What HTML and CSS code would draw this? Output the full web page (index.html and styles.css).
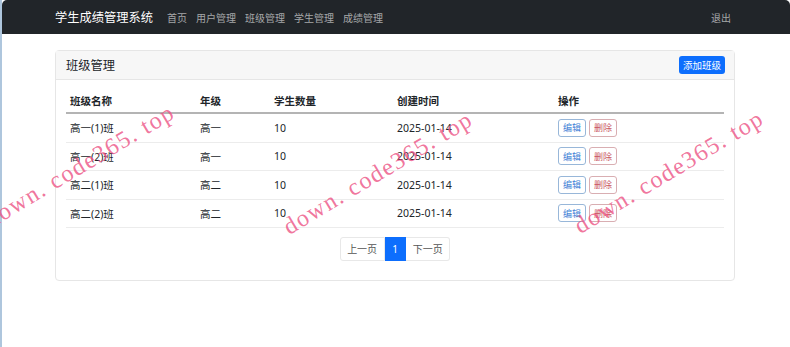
FILE: index.html
```html
<!DOCTYPE html>
<html lang="zh-CN">
<head>
    <meta charset="UTF-8">
    <meta name="viewport" content="width=device-width, initial-scale=1.0">
    <title>班级管理</title>
    <link rel="stylesheet" href="styles.css">
</head>
<body>
    <div class="window">
        <nav class="navbar">
            <a href="#" class="brand">学生成绩管理系统</a>
            <div class="nav-links">
                <a href="#">首页</a>
                <a href="#">用户管理</a>
                <a href="#">班级管理</a>
                <a href="#">学生管理</a>
                <a href="#">成绩管理</a>
            </div>
            <a href="#" class="logout">退出</a>
        </nav>

        <div class="container">
            <div class="card">
                <div class="card-header">
                    <span class="card-title">班级管理</span>
                    <button class="btn-add">添加班级</button>
                </div>
                <div class="card-body">
                    <table class="table">
                        <thead>
                            <tr>
                                <th class="col-name">班级名称</th>
                                <th class="col-grade">年级</th>
                                <th class="col-count">学生数量</th>
                                <th class="col-time">创建时间</th>
                                <th>操作</th>
                            </tr>
                        </thead>
                        <tbody>
                            <tr>
                                <td>高一(1)班</td><td>高一</td><td>10</td><td>2025-01-14</td>
                                <td><button class="btn-edit">编辑</button><button class="btn-del">删除</button></td>
                            </tr>
                            <tr>
                                <td>高一(2)班</td><td>高一</td><td>10</td><td>2025-01-14</td>
                                <td><button class="btn-edit">编辑</button><button class="btn-del">删除</button></td>
                            </tr>
                            <tr>
                                <td>高二(1)班</td><td>高二</td><td>10</td><td>2025-01-14</td>
                                <td><button class="btn-edit">编辑</button><button class="btn-del">删除</button></td>
                            </tr>
                            <tr>
                                <td>高二(2)班</td><td>高二</td><td>10</td><td>2025-01-14</td>
                                <td><button class="btn-edit">编辑</button><button class="btn-del">删除</button></td>
                            </tr>
                        </tbody>
                    </table>
                    <div class="pagination">
                        <a href="#" class="page">上一页</a>
                        <a href="#" class="page active">1</a>
                        <a href="#" class="page">下一页</a>
                    </div>
                </div>
            </div>
        </div>
    </div>

    <div class="watermark wm-1">down. code365. top</div>
    <div class="watermark wm-2">down. code365. top</div>
    <div class="watermark wm-3">down. code365. top</div>
</body>
</html>
```

FILE: styles.css
```css
html {
    background-color: #c9d8e6;
}
body {
    font-family: 'Noto Sans', 'Noto Sans CJK SC', sans-serif;
    margin: 0;
    color: #212529;
    overflow: hidden;
}
.window {
    min-height: 100vh;
    box-sizing: border-box;
    border-left: 2px solid #aec6dd;
    background-color: #fff;
}
.navbar {
    display: flex;
    align-items: center;
    height: 34px;
    padding: 0 59px 0 53px;
    background-color: #212529;
    border-top-left-radius: 5px;
    border-top-right-radius: 5px;
}
.brand {
    font-size: 12.25px;
    color: #fff;
    text-decoration: none;
    margin-right: 14px;
}
.nav-links {
    display: flex;
    gap: 9px;
    flex: 1;
}
.nav-links a,
.logout {
    font-size: 10px;
    color: rgba(255, 255, 255, 0.6);
    text-decoration: none;
}
.container {
    padding: 16px 55px 0 53px;
}
.card {
    border: 1px solid #e6e6e6;
    border-radius: 4px;
}
.card-header {
    display: flex;
    justify-content: space-between;
    align-items: center;
    height: 28px;
    padding: 0 9px 0 10px;
    background-color: #f7f7f7;
    border-bottom: 1px solid #e6e6e6;
}
.card-title {
    font-size: 12.25px;
}
.btn-add {
    font-family: inherit;
    font-size: 9.5px;
    height: 18px;
    padding: 0 4px;
    border: none;
    border-radius: 3px;
    color: #fff;
    background-color: #0d6efd;
}
.card-body {
    padding: 8px 10px 19px 10px;
}
.table {
    width: 100%;
    border-collapse: collapse;
    font-size: 10.5px;
}
.table th {
    text-align: left;
    font-weight: 700;
    height: 24px;
    padding: 0 4px;
    border-bottom: 2px solid #b4b4b4;
}
.table td {
    height: 27.5px;
    padding: 0 4px;
    border-bottom: 1px solid #ececec;
}
.col-name { width: 122px; }
.col-grade { width: 66px; }
.col-count { width: 115px; }
.col-time { width: 153px; }
.btn-edit,
.btn-del {
    font-family: inherit;
    font-size: 9px;
    height: 18px;
    width: 28px;
    padding: 0;
    border-radius: 3px;
    background-color: #fff;
    vertical-align: middle;
}
.btn-edit {
    color: #3d7fd6;
    border: 1px solid #98b7d9;
    margin-right: 3px;
}
.btn-del {
    color: #c8565f;
    border: 1px solid #d9aeb2;
}
.pagination {
    display: flex;
    justify-content: center;
    margin-top: 9px;
}
.page {
    font-size: 10px;
    height: 22px;
    line-height: 22px;
    padding: 0 6.5px;
    color: #555;
    text-decoration: none;
    border: 1px solid #e8e8e8;
}
.page + .page {
    border-left: none;
}
.page:first-child {
    border-radius: 3px 0 0 3px;
}
.page:last-child {
    border-radius: 0 3px 3px 0;
}
.page.active {
    padding: 0 7.5px;
    color: #fff;
    background-color: #0d6efd;
    border-color: #0d6efd;
}
.watermark {
    position: absolute;
    font-family: 'Liberation Serif', serif;
    font-size: 24px;
    letter-spacing: 1.5px;
    white-space: nowrap;
    color: rgba(236, 82, 132, 0.8);
    transform: translate(-50%, -50%) rotate(-31deg);
    pointer-events: none;
}
.wm-1 { left: 80px; top: 166px; }
.wm-2 { left: 378px; top: 173px; }
.wm-3 { left: 669px; top: 172px; }
```
